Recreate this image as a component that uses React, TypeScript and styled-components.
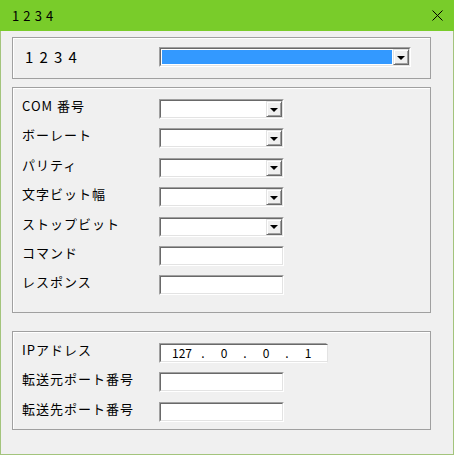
import React from "react";
import styled, { createGlobalStyle } from "styled-components";

const Global = createGlobalStyle`
  html, body { margin: 0; padding: 0; background: #f0f0f0; }
  * { box-sizing: border-box; }
`;

const Window = styled.div`
  width: 454px;
  height: 455px;
  border: 1px solid #a3c47c;
  border-top: none;
  background: #f0f0f0;
  display: flex;
  flex-direction: column;
  font-family: "Noto Sans CJK JP", "DejaVu Sans", sans-serif;
  color: #000;
`;

const TitleBar = styled.div`
  height: 31px;
  margin: 0 -1px;
  background: #79cc2a;
  display: flex;
  align-items: center;
  justify-content: space-between;
  padding: 0 11px 0 12px;
  flex-shrink: 0;
`;

const Title = styled.span`
  font-size: 13px;
  letter-spacing: 0.6px;
  line-height: 1;
  white-space: pre;
`;

const CloseIcon = styled.svg`
  width: 11px;
  height: 11px;
  display: block;
`;

const Content = styled.div`
  padding: 6px 22px 0 11px;
  display: flex;
  flex-direction: column;
`;

const Group = styled.div<{ $h: number; $mt: number; $pt: number }>`
  height: ${(p) => p.$h}px;
  margin-top: ${(p) => p.$mt}px;
  padding-top: ${(p) => p.$pt}px;
  border: 1px solid #a0a0a0;
  box-shadow: inset 1px 1px 0 #ffffff;
  display: grid;
  grid-template-columns: 146px auto;
  align-content: start;
  row-gap: 9.4px;
`;

const Label = styled.div<{ $pl?: number }>`
  padding-left: ${(p) => p.$pl ?? 9}px;
  font-size: 13px;
  letter-spacing: 1px;
  line-height: 14px;
  height: 20px;
  white-space: pre;
`;

const TopLabel = styled(Label)`
  font-size: 15px;
  letter-spacing: 1.4px;
  line-height: 20px;
`;

const Sunken = styled.div<{ $w: number }>`
  width: ${(p) => p.$w}px;
  height: 20px;
  background: #fff;
  border-top: 1px solid #a0a0a0;
  border-left: 1px solid #a0a0a0;
  border-right: 1px solid #ffffff;
  border-bottom: 1px solid #ffffff;
  display: flex;
`;

const SunkenInner = styled.div`
  flex: 1;
  border-top: 1px solid #696969;
  border-left: 1px solid #696969;
  border-right: 1px solid #e3e3e3;
  border-bottom: 1px solid #e3e3e3;
  display: flex;
  align-items: stretch;
  background: #fff;
`;

const ComboField = styled.div<{ $selected?: boolean }>`
  flex: 1;
  margin: ${(p) => (p.$selected ? "1px" : "0")};
  background: ${(p) => (p.$selected ? "#3399ff" : "#fff")};
`;

const DropButton = styled.div`
  width: 16px;
  background: #f0f0f0;
  border-top: 1px solid #e3e3e3;
  border-left: 1px solid #e3e3e3;
  border-right: 1px solid #696969;
  border-bottom: 1px solid #696969;
  box-shadow: inset 1px 1px 0 #ffffff, inset -1px -1px 0 #a0a0a0;
  display: flex;
  align-items: center;
  justify-content: center;
`;

const Arrow = styled.div`
  width: 0;
  height: 0;
  border-left: 4px solid transparent;
  border-right: 4px solid transparent;
  border-top: 4px solid #000;
  margin-top: 1px;
`;

const IpWrap = styled.div`
  display: flex;
  align-items: center;
  padding-left: 2px;
  font-size: 12px;
  line-height: 1;
`;

const IpSeg = styled.span`
  width: 38px;
  text-align: center;
`;

const IpDot = styled.span`
  width: 4px;
  text-align: center;
`;

const Combo: React.FC<{ w: number; selected?: boolean }> = ({ w, selected }) => (
  <Sunken $w={w}>
    <SunkenInner>
      <ComboField $selected={selected} />
      <DropButton>
        <Arrow />
      </DropButton>
    </SunkenInner>
  </Sunken>
);

const TextBox: React.FC<{ w: number; children?: React.ReactNode }> = ({ w, children }) => (
  <Sunken $w={w}>
    <SunkenInner>{children}</SunkenInner>
  </Sunken>
);

const serialRows: { label: string; combo: boolean }[] = [
  { label: "COM 番号", combo: true },
  { label: "ボーレート", combo: true },
  { label: "パリティ", combo: true },
  { label: "文字ビット幅", combo: true },
  { label: "ストップビット", combo: true },
  { label: "コマンド", combo: false },
  { label: "レスポンス", combo: false },
];

export default function App() {
  const ip = ["127", "0", "0", "1"];
  return (
    <>
      <Global />
      <Window>
        <TitleBar>
          <Title>1 2 3 4</Title>
          <CloseIcon viewBox="0 0 11 11">
            <path d="M0.5 0.5 L10.5 10.5 M10.5 0.5 L0.5 10.5" stroke="#000" strokeWidth="1" fill="none" />
          </CloseIcon>
        </TitleBar>
        <Content>
          <Group $h={42} $mt={0} $pt={9}>
            <TopLabel $pl={12}>1 2 3 4</TopLabel>
            <Combo w={252} selected />
          </Group>
          <Group $h={226} $mt={8} $pt={11}>
            {serialRows.map((r) => (
              <React.Fragment key={r.label}>
                <Label>{r.label}</Label>
                {r.combo ? <Combo w={125} /> : <TextBox w={125} />}
              </React.Fragment>
            ))}
          </Group>
          <Group $h={99} $mt={18} $pt={11}>
            <Label>IPアドレス</Label>
            <TextBox w={168}>
              <IpWrap>
                {ip.map((s, i) => (
                  <React.Fragment key={i}>
                    {i > 0 && <IpDot>.</IpDot>}
                    <IpSeg>{s}</IpSeg>
                  </React.Fragment>
                ))}
              </IpWrap>
            </TextBox>
            <Label>転送元ポート番号</Label>
            <TextBox w={125} />
            <Label>転送先ポート番号</Label>
            <TextBox w={125} />
          </Group>
        </Content>
      </Window>
    </>
  );
}
